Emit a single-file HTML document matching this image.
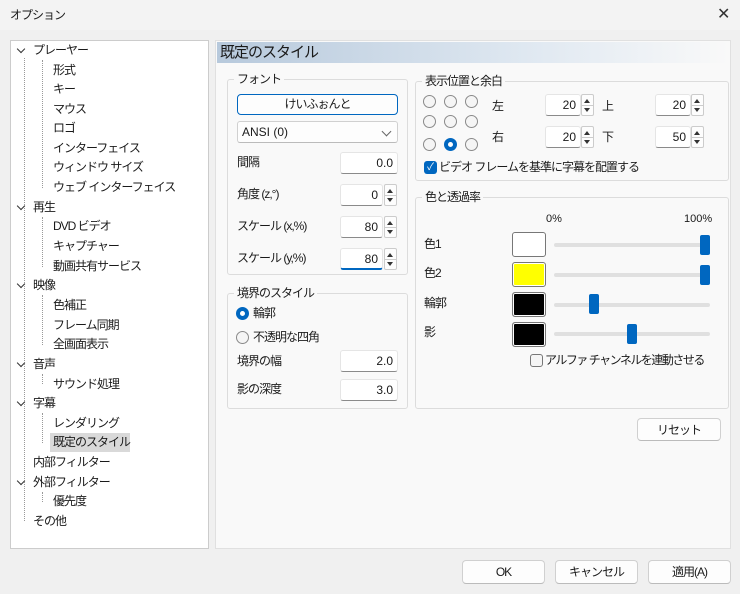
<!DOCTYPE html><html><head><meta charset="utf-8"><style>
*{box-sizing:border-box;margin:0;padding:0}
body{width:740px;height:594px;background:#f0f0f0;font-family:"Liberation Sans","Noto Sans CJK JP",sans-serif;font-size:12px;letter-spacing:-1px;color:#1a1a1a;position:relative;overflow:hidden}
.a{position:absolute;white-space:nowrap}
.t{position:absolute;white-space:nowrap;line-height:14px}
.grp{position:absolute;border:1px solid #dcdcdc;border-radius:3px}
.gt{position:absolute;background:#f9f9f9;padding:0 3px;line-height:14px;top:-8px;left:6px}
.inp{position:absolute;background:#fff;border:1px solid #e5e5e5;border-bottom:1px solid #8a8a8a;border-radius:3px;text-align:right;padding-right:4px;line-height:20px;height:22px;letter-spacing:0}
.sp{position:absolute;width:13px;height:22px;border:1px solid #ccc;background:#fdfdfd;border-radius:2px}
.sp:before{content:"";position:absolute;left:2px;top:4px;border:3.5px solid transparent;border-bottom:4px solid #333;border-top:0}
.sp:after{content:"";position:absolute;left:2px;top:13px;border:3.5px solid transparent;border-top:4px solid #333;border-bottom:0}
.sp i{position:absolute;left:0;right:0;top:10px;border-top:1px solid #ccc}
.rd{position:absolute;width:13px;height:13px;border:1px solid #8a8a8a;border-radius:50%;background:#f5f5f5}
.rd.on{background:#fff;border:4px solid #0067c0}
.btn{position:absolute;background:#fdfdfd;border:1px solid #d0d0d0;border-bottom-color:#bbb;border-radius:4px;text-align:center;line-height:22px}
.sw{position:absolute;width:34px;height:25px;border:1px solid #777;border-radius:3px;box-shadow:inset 0 0 0 1px #fff}
.sl{position:absolute;left:554px;width:156px;height:4px;background:#e0e0e0;border-radius:2px}
.th{position:absolute;width:10px;height:20px;background:#0067c0;border-radius:2px}
.tr .c{position:absolute;left:18px;width:6px;height:6px;border-left:1.5px solid #333;border-bottom:1.5px solid #333;transform:rotate(-45deg);background:#fff}
.vl{position:absolute;border-left:1px dotted #999}
</style></head><body>
<div class="a" style="left:0;top:0;width:740px;height:30px;background:#f3f3f3"></div>
<div class="t" style="left:10px;top:8px">オプション</div>
<div class="a" style="left:717px;top:5px;font-size:16px;line-height:20px;color:#333">✕</div>

<div class="a" style="left:10px;top:40px;width:199px;height:509px;background:#fff;border:1px solid #ccc"></div>
<div class="vl" style="left:24px;top:58px;height:463px"></div>
<div class="vl" style="left:42px;top:60px;height:128px"></div>
<div class="vl" style="left:42px;top:217px;height:50px"></div>
<div class="vl" style="left:42px;top:295px;height:50px"></div>
<div class="vl" style="left:42px;top:374px;height:10px"></div>
<div class="vl" style="left:42px;top:413px;height:30px"></div>
<div class="vl" style="left:42px;top:492px;height:10px"></div>
<div class="tr">
<div class="t" style="left:33px;top:43px">プレーヤー</div>
<div class="t" style="left:53px;top:63px">形式</div>
<div class="t" style="left:53px;top:82px">キー</div>
<div class="t" style="left:53px;top:102px">マウス</div>
<div class="t" style="left:53px;top:121px">ロゴ</div>
<div class="t" style="left:53px;top:141px">インターフェイス</div>
<div class="t" style="left:53px;top:160px">ウィンドウ サイズ</div>
<div class="t" style="left:53px;top:180px">ウェブ インターフェイス</div>
<div class="t" style="left:33px;top:200px">再生</div>
<div class="t" style="left:53px;top:219px">DVD ビデオ</div>
<div class="t" style="left:53px;top:239px">キャプチャー</div>
<div class="t" style="left:53px;top:259px">動画共有サービス</div>
<div class="t" style="left:33px;top:278px">映像</div>
<div class="t" style="left:53px;top:298px">色補正</div>
<div class="t" style="left:53px;top:318px">フレーム同期</div>
<div class="t" style="left:53px;top:337px">全画面表示</div>
<div class="t" style="left:33px;top:357px">音声</div>
<div class="t" style="left:53px;top:377px">サウンド処理</div>
<div class="t" style="left:33px;top:396px">字幕</div>
<div class="t" style="left:53px;top:416px">レンダリング</div>
<div class="a" style="left:50px;top:433px;width:80px;height:19px;background:#d9d9d9"></div>
<div class="t" style="left:53px;top:435px">既定のスタイル</div>
<div class="t" style="left:33px;top:455px">内部フィルター</div>
<div class="t" style="left:33px;top:475px">外部フィルター</div>
<div class="t" style="left:53px;top:494px">優先度</div>
<div class="t" style="left:33px;top:514px">その他</div>
<div class="c" style="top:46px"></div><div class="c" style="top:203px"></div><div class="c" style="top:281px"></div><div class="c" style="top:360px"></div><div class="c" style="top:399px"></div><div class="c" style="top:478px"></div>
</div>

<div class="a" style="left:215px;top:40px;width:516px;height:509px;background:#f9f9f9;border:1px solid #e0e0e0"></div>
<div class="a" style="left:217px;top:42px;width:512px;height:21px;background:linear-gradient(90deg,#b7c9dc,#dfe8f1 60%,#f9f9f9)"></div>
<div class="t" style="left:220px;top:44px;font-size:15px;line-height:18px">既定のスタイル</div>

<div class="grp" style="left:227px;top:79px;width:181px;height:196px"><div class="gt">フォント</div></div>
<div class="btn" style="left:237px;top:94px;width:161px;height:21px;border:1px solid #0067c0;line-height:19px">けいふぉんと</div>
<div class="btn" style="left:237px;top:121px;width:161px;height:22px;text-align:left;padding-left:4px;line-height:20px;border-radius:3px;letter-spacing:0">ANSI (0)<span style="position:absolute;right:7px;top:6px;width:7px;height:7px;border-right:1px solid #666;border-bottom:1px solid #666;transform:rotate(45deg)"></span></div>
<div class="t" style="left:237px;top:155px">間隔</div><div class="inp" style="left:340px;top:152px;width:58px">0.0</div>
<div class="t" style="left:237px;top:187px">角度 (z,°)</div><div class="inp" style="left:340px;top:184px;width:43px">0</div><div class="sp" style="left:384px;top:184px"><i></i></div>
<div class="t" style="left:237px;top:219px">スケール (x,%)</div><div class="inp" style="left:340px;top:216px;width:43px">80</div><div class="sp" style="left:384px;top:216px"><i></i></div>
<div class="t" style="left:237px;top:251px">スケール (y,%)</div><div class="inp" style="left:340px;top:248px;width:43px;border-bottom:2px solid #0067c0">80</div><div class="sp" style="left:384px;top:248px"><i></i></div>

<div class="grp" style="left:227px;top:293px;width:181px;height:116px"><div class="gt">境界のスタイル</div></div>
<div class="rd on" style="left:236px;top:307px"></div><div class="t" style="left:253px;top:306px">輪郭</div>
<div class="rd" style="left:236px;top:331px"></div><div class="t" style="left:253px;top:330px">不透明な四角</div>
<div class="t" style="left:237px;top:354px">境界の幅</div><div class="inp" style="left:340px;top:350px;width:58px">2.0</div>
<div class="t" style="left:237px;top:382px">影の深度</div><div class="inp" style="left:340px;top:379px;width:58px">3.0</div>

<div class="grp" style="left:415px;top:81px;width:314px;height:100px"><div class="gt">表示位置と余白</div></div>
<div class="rd" style="left:423px;top:95px"></div><div class="rd" style="left:444px;top:95px"></div><div class="rd" style="left:465px;top:95px"></div>
<div class="rd" style="left:423px;top:115px"></div><div class="rd" style="left:444px;top:115px"></div><div class="rd" style="left:465px;top:115px"></div>
<div class="rd" style="left:423px;top:138px"></div><div class="rd on" style="left:444px;top:138px"></div><div class="rd" style="left:465px;top:138px"></div>
<div class="t" style="left:492px;top:99px">左</div><div class="inp" style="left:545px;top:94px;width:36px">20</div><div class="sp" style="left:581px;top:94px"><i></i></div>
<div class="t" style="left:602px;top:99px">上</div><div class="inp" style="left:655px;top:94px;width:36px">20</div><div class="sp" style="left:691px;top:94px"><i></i></div>
<div class="t" style="left:492px;top:130px">右</div><div class="inp" style="left:545px;top:126px;width:36px">20</div><div class="sp" style="left:581px;top:126px"><i></i></div>
<div class="t" style="left:602px;top:130px">下</div><div class="inp" style="left:655px;top:126px;width:36px">50</div><div class="sp" style="left:691px;top:126px"><i></i></div>
<div class="a" style="left:424px;top:161px;width:13px;height:13px;background:#0067c0;border-radius:3px;color:#fff;font-size:10px;line-height:13px;text-align:center;letter-spacing:0">✓</div>
<div class="t" style="left:439px;top:160px">ビデオ フレームを基準に字幕を配置する</div>

<div class="grp" style="left:415px;top:197px;width:314px;height:212px"><div class="gt">色と透過率</div></div>
<div class="t" style="left:546px;top:212px;font-size:11px;letter-spacing:0">0%</div><div class="t" style="left:684px;top:212px;font-size:11px;letter-spacing:0">100%</div>
<div class="t" style="left:424px;top:237px">色1</div><div class="sw" style="left:512px;top:232px;background:#fff"></div><div class="sl" style="top:243px"></div><div class="th" style="left:700px;top:235px"></div>
<div class="t" style="left:424px;top:266px">色2</div><div class="sw" style="left:512px;top:262px;background:#ffff00"></div><div class="sl" style="top:273px"></div><div class="th" style="left:700px;top:265px"></div>
<div class="t" style="left:424px;top:296px">輪郭</div><div class="sw" style="left:512px;top:292px;background:#000"></div><div class="sl" style="top:303px"></div><div class="th" style="left:589px;top:294px"></div>
<div class="t" style="left:424px;top:325px">影</div><div class="sw" style="left:512px;top:322px;background:#000"></div><div class="sl" style="top:332px"></div><div class="th" style="left:627px;top:324px"></div>
<div class="a" style="left:530px;top:354px;width:13px;height:13px;border:1px solid #777;border-radius:3px;background:#f5f5f5"></div>
<div class="t" style="left:545px;top:353px;letter-spacing:-1.5px">アルファ チャンネルを連動させる</div>

<div class="btn" style="left:637px;top:418px;width:84px;height:23px">リセット</div>
<div class="btn" style="left:462px;top:560px;width:83px;height:24px">OK</div>
<div class="btn" style="left:555px;top:560px;width:83px;height:24px">キャンセル</div>
<div class="btn" style="left:648px;top:560px;width:83px;height:24px">適用(A)</div>
</body></html>
